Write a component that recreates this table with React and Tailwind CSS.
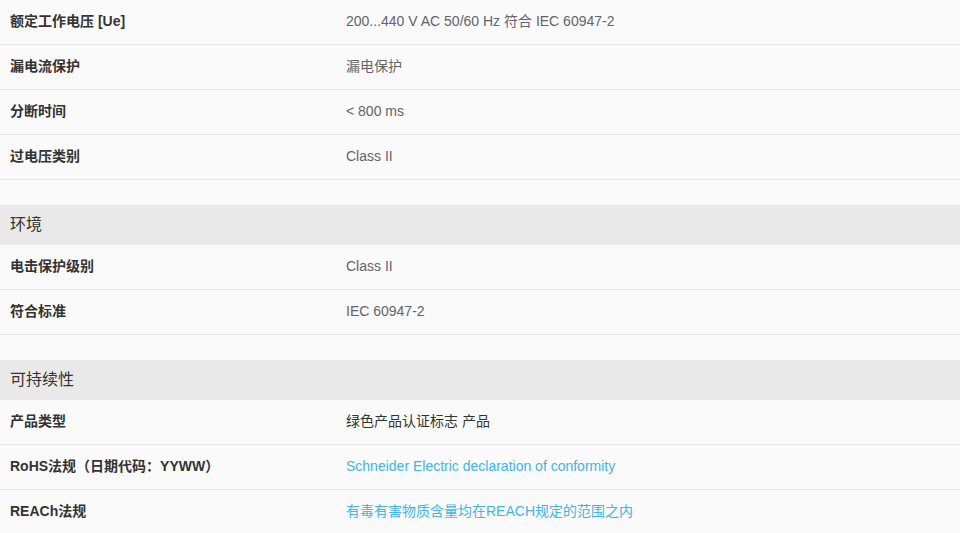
// Product spec table: grouped rows of label / value pairs

const groups = [
  {
    title: null,
    rows: [
      { label: '额定工作电压 [Ue]', value: '200...440 V AC 50/60 Hz 符合 IEC 60947-2' },
      { label: '漏电流保护', value: '漏电保护' },
      { label: '分断时间', value: '< 800 ms' },
      { label: '过电压类别', value: 'Class II' },
    ],
  },
  {
    title: '环境',
    rows: [
      { label: '电击保护级别', value: 'Class II' },
      { label: '符合标准', value: 'IEC 60947-2' },
    ],
  },
  {
    title: '可持续性',
    rows: [
      { label: '产品类型', value: '绿色产品认证标志 产品', dark: true },
      { label: 'RoHS法规（日期代码：YYWW）', value: 'Schneider Electric declaration of conformity', link: true },
      { label: 'REACh法规', value: '有毒有害物质含量均在REACH规定的范围之内', link: true, last: true },
    ],
  },
];

function SpecRow({ row }) {
  let valueClass = 'text-[#626469]';
  if (row.link) valueClass = 'text-[#42b4e6]';
  if (row.dark) valueClass = 'text-[#333333]';

  return (
    <div className={`grid grid-cols-[346px_1fr] h-[45px] pb-[2px] items-center ${row.last ? '' : 'border-b border-[#e6e6e6]'}`}>
      <div className="pl-[10px] text-[14px] font-bold text-[#333333]">{row.label}</div>
      <div className={`text-[14px] ${valueClass}`}>{row.value}</div>
    </div>
  );
}

export default function App() {
  return (
    <main
      className="w-[960px] h-[533px] overflow-hidden bg-[#fafafa]"
      style={{ fontFamily: '"Liberation Sans", "Noto Sans CJK SC", sans-serif' }}
    >
      {groups.map((group, i) => (
        <section key={i} className={i > 0 ? 'mt-[25px]' : ''}>
          {group.title && (
            <div className="h-[40px] flex items-center pl-[10px] bg-[#e9e9e9] text-[16px] text-[#333333]">
              {group.title}
            </div>
          )}
          {group.rows.map((row) => (
            <SpecRow key={row.label} row={row} />
          ))}
        </section>
      ))}
    </main>
  );
}
